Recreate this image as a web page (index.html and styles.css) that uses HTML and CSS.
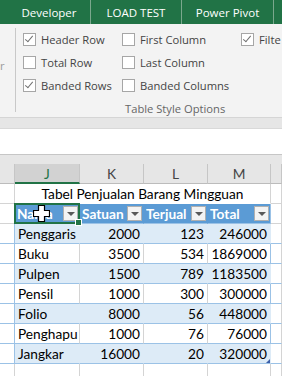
FILE: index.html
```html
<!DOCTYPE html>
<html lang="id">
<head>
    <meta charset="UTF-8">
    <meta name="viewport" content="width=device-width, initial-scale=1.0">
    <title>Tabel Penjualan</title>
    <link rel="stylesheet" href="styles.css">
</head>
<body>
    <!-- Tab bar -->
    <div class="tabs">
        <div class="tab t1">Developer</div>
        <div class="tab t2">LOAD TEST</div>
        <div class="tab t3">Power Pivot</div>
    </div>

    <!-- Ribbon: Table Style Options -->
    <div class="ribbon">
        <div class="prev"><span class="prev-label">r</span></div>
        <div class="sep"></div>
        <div class="group">
            <div class="opts">
                <label class="opt"><span class="box on"></span>Header Row</label>
                <label class="opt"><span class="box"></span>First Column</label>
                <label class="opt"><span class="box on"></span>Filte</label>
                <label class="opt"><span class="box"></span>Total Row</label>
                <label class="opt"><span class="box"></span>Last Column</label>
                <span></span>
                <label class="opt"><span class="box on"></span>Banded Rows</label>
                <label class="opt"><span class="box"></span>Banded Columns</label>
                <span></span>
            </div>
            <div class="group-label">Table Style Options</div>
        </div>
    </div>

    <div class="band"></div>
    <div class="fbar"></div>
    <div class="outline"></div>

    <!-- Sheet -->
    <div class="sheet">
        <div class="row colhead">
            <div class="c"></div>
            <div class="c cur">J</div>
            <div class="c">K</div>
            <div class="c">L</div>
            <div class="c">M</div>
            <div class="c"></div>
        </div>
        <div class="row">
            <div class="c"></div>
            <div class="c title">Tabel Penjualan Barang Mingguan</div>
            <div class="c"></div>
        </div>
        <div class="row head">
            <div class="c"></div>
            <div class="c th sel"><span class="tx">Nama</span><span class="dd"></span>
                <svg class="cursor" width="17" height="17" viewBox="0 0 17 17"><path d="M5.5 0.5h6v5h5v6h-5v5h-6v-5h-5v-6h5z" fill="#fff" stroke="#000" stroke-width="1.2"/></svg>
            </div>
            <div class="c th"><span class="tx">Satuan</span><span class="dd"></span></div>
            <div class="c th"><span class="tx">Terjual</span><span class="dd"></span></div>
            <div class="c th last"><span class="tx">Total</span><span class="dd"></span></div>
            <div class="c"></div>
        </div>
        <div id="rows"></div>
        <div class="row tail">
            <div class="c"></div>
            <div class="c"></div>
            <div class="c"></div>
            <div class="c"></div>
            <div class="c"></div>
            <div class="c"></div>
        </div>
    </div>

    <script>
        const data = [
            { nama: 'Penggaris', satuan: 2000, terjual: 123, total: 246000 },
            { nama: 'Buku', satuan: 3500, terjual: 534, total: 1869000 },
            { nama: 'Pulpen', satuan: 1500, terjual: 789, total: 1183500 },
            { nama: 'Pensil', satuan: 1000, terjual: 300, total: 300000 },
            { nama: 'Folio', satuan: 8000, terjual: 56, total: 448000 },
            { nama: 'Penghapu', satuan: 1000, terjual: 76, total: 76000 },
            { nama: 'Jangkar', satuan: 16000, terjual: 20, total: 320000 }
        ];

        const rows = document.getElementById('rows');
        data.forEach((item, i) => {
            const row = document.createElement('div');
            row.className = 'row t' + (i % 2 === 0 ? ' band-row' : '') + (i === data.length - 1 ? ' end' : '');
            row.innerHTML =
                '<div class="c"></div>' +
                `<div class="c">${item.nama}</div>` +
                `<div class="c num">${item.satuan}</div>` +
                `<div class="c num">${item.terjual}</div>` +
                `<div class="c num last">${item.total}</div>` +
                '<div class="c"></div>';
            rows.appendChild(row);
        });
    </script>
</body>
</html>
```

FILE: styles.css
```css
body {
    margin: 0;
    width: 282px;
    height: 376px;
    overflow: hidden;
    background: #ffffff;
    font-family: "Open Sans", sans-serif;
}
.tabs {
    display: flex;
    height: 24px;
    padding-left: 8px;
    background-color: #217346;
    color: #ffffff;
    font-size: 11.5px;
}
.tab {
    display: flex;
    align-items: center;
    justify-content: center;
    flex: none;
    border-right: 1px solid #7aa88d;
    white-space: nowrap;
}
.t1 { width: 82px; }
.t2 { width: 90px; }
.t3 { width: 91px; }
.ribbon {
    display: flex;
    height: 93px;
    overflow: hidden;
    background-color: #f3f3f3;
    border-bottom: 1px solid #d5d5d5;
    color: #444444;
    font-size: 11.2px;
}
.prev {
    width: 15px;
    flex: none;
    padding-top: 34px;
    color: #9a9a9a;
}
.sep {
    width: 1px;
    flex: none;
    margin-top: 4px;
    height: 84px;
    background-color: #c8c8c8;
}
.group {
    display: flex;
    flex-direction: column;
    flex: none;
    padding-left: 7px;
}
.opts {
    display: grid;
    grid-template-columns: 99px 119px 41px;
    grid-auto-rows: 23px;
    padding-top: 4px;
}
.opt {
    display: flex;
    align-items: center;
    gap: 5px;
    white-space: nowrap;
    overflow: hidden;
}
.box {
    width: 11px;
    height: 11px;
    border: 1px solid #a6a6a6;
    background-color: #ffffff;
    flex: none;
    position: relative;
}
.box.on::after {
    content: "";
    position: absolute;
    left: 3px;
    top: 0px;
    width: 3px;
    height: 7px;
    border-right: 1.5px solid #707070;
    border-bottom: 1.5px solid #707070;
    transform: rotate(40deg);
}
.group-label {
    margin-top: 4px;
    padding-left: 102px;
    color: #666666;
}
.band {
    height: 10px;
    background-color: #e6e6e6;
}
.fbar {
    height: 25px;
    background-color: #ffffff;
    border-top: 1px solid #d9d9d9;
    border-bottom: 1px solid #c6c6c6;
}
.outline {
    height: 9px;
    background-color: #e6e6e6;
}
.sheet {
    font-family: Lato, sans-serif;
    font-size: 13.7px;
    color: #000000;
}
.row {
    display: grid;
    grid-template-columns: 15px 65px 64px 64px 63px 11px;
    height: 20px;
}
.c {
    box-sizing: border-box;
    border-right: 1px solid #d4d4d4;
    border-bottom: 1px solid #d4d4d4;
    padding: 0 3px;
    line-height: 19px;
    white-space: nowrap;
    overflow: hidden;
}
.num {
    text-align: right;
}
.colhead .c {
    background-color: #e6e6e6;
    border-right-color: #c6c6c6;
    border-bottom-color: #bcbcbc;
    text-align: center;
    color: #444444;
}
.colhead .cur {
    background-color: #d2d2d2;
    border-bottom: 2px solid #217346;
    color: #217346;
}
.title {
    grid-column: 2 / 6;
    text-align: center;
    border-bottom-color: #ffffff;
}
.head .th {
    display: flex;
    align-items: center;
    gap: 2px;
    background-color: #5b9bd5;
    border-right-color: #5b9bd5;
    border-bottom-color: #9bc2e6;
    color: #ffffff;
    font-weight: bold;
    padding: 0 1px 0 2px;
}
.head .c:first-child,
.t .c:first-child {
    border-right-color: #9bc2e6;
}
.head .th.last,
.t .last {
    border-right-color: #9bc2e6;
}
.tx {
    flex: 1;
    overflow: hidden;
}
.dd {
    width: 13px;
    height: 13px;
    border: 1px solid #b0b0b0;
    background-color: #f3f3f3;
    flex: none;
    position: relative;
}
.dd::after {
    content: "";
    position: absolute;
    left: 3px;
    top: 5px;
    border-left: 4px solid transparent;
    border-right: 4px solid transparent;
    border-top: 4px solid #595959;
}
.sel {
    position: relative;
    overflow: visible;
}
.sel::before {
    content: "";
    position: absolute;
    left: -1px;
    top: -1px;
    right: -1px;
    bottom: -1px;
    border: 2px solid #217346;
}
.sel::after {
    content: "";
    position: absolute;
    right: -3px;
    bottom: -3px;
    width: 5px;
    height: 5px;
    background-color: #217346;
    border: 1px solid #ffffff;
}
.cursor {
    position: absolute;
    left: 18px;
    top: 1px;
}
.t .c {
    border-bottom-color: #9bc2e6;
}
.band-row .c:nth-child(n+2):nth-child(-n+5) {
    background-color: #ddebf7;
    border-right-color: #ddebf7;
}
.band-row .c.last {
    border-right-color: #9bc2e6;
}
.end .last {
    position: relative;
}
.end .last::after {
    content: "";
    position: absolute;
    right: 0;
    bottom: 0;
    border-left: 4px solid transparent;
    border-bottom: 4px solid #3b5ea8;
}
.tail {
    height: 13px;
}
```
